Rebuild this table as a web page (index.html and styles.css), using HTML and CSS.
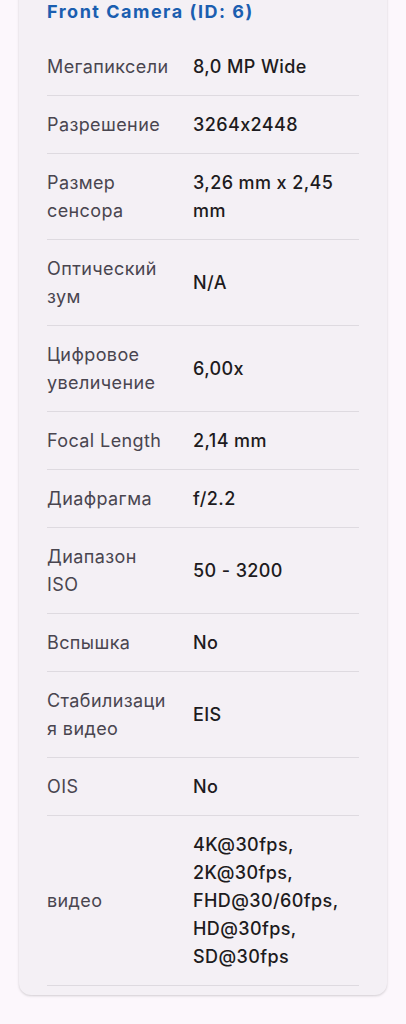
FILE: index.html
```html
<!DOCTYPE html>
<html lang="ru">
<head>
<meta charset="utf-8">
<link rel="stylesheet" href="styles.css">
</head>
<body>
<div class="card">
  <h2 class="title">Front Camera (ID: 6)</h2>
  <div class="rows">
    <div class="row"><div class="label">Мегапиксели</div><div class="value">8,0 MP Wide</div></div>
    <div class="row"><div class="label">Разрешение</div><div class="value">3264x2448</div></div>
    <div class="row"><div class="label">Размер сенсора</div><div class="value">3,26 mm x 2,45 mm</div></div>
    <div class="row"><div class="label">Оптический зум</div><div class="value">N/A</div></div>
    <div class="row"><div class="label">Цифровое увеличение</div><div class="value">6,00x</div></div>
    <div class="row"><div class="label">Focal Length</div><div class="value">2,14 mm</div></div>
    <div class="row"><div class="label">Диафрагма</div><div class="value">f/2.2</div></div>
    <div class="row"><div class="label">Диапазон ISO</div><div class="value">50 - 3200</div></div>
    <div class="row"><div class="label">Вспышка</div><div class="value">No</div></div>
    <div class="row"><div class="label">Стабилизация видео</div><div class="value">EIS</div></div>
    <div class="row"><div class="label">OIS</div><div class="value">No</div></div>
    <div class="row"><div class="label">видео</div><div class="value">4K@30fps, 2K@30fps, FHD@30/60fps, HD@30fps, SD@30fps</div></div>
  </div>
</div>
</body>
</html>
```
FILE: styles.css
```css
html, body {
  margin: 0;
  padding: 0;
  background: #fcf7fc;
}
body {
  font-family: Inter, "Noto Sans", sans-serif;
  font-feature-settings: "calt" 0;
  padding: 0 19px 28px;
}
.card {
  margin-top: -20px;
  background: #f4f0f5;
  border-radius: 12px;
  padding: 20px 28px 9px;
  box-shadow: 0 1px 3px rgba(0,0,0,0.12), 0 1px 2px rgba(0,0,0,0.06);
}
.title {
  margin: 0 0 14px;
  font-size: 18px;
  line-height: 24px;
  font-weight: 700;
  color: #1b5eb0;
  letter-spacing: 1.5px;
}
.row {
  display: grid;
  grid-template-columns: 124px 1fr;
  column-gap: 22px;
  align-items: center;
  padding: 15px 0 14px;
  border-bottom: 1px solid #dedae0;
  font-size: 18px;
  line-height: 28px;
  letter-spacing: 0.4px;
}
.label {
  color: #49454f;
  overflow-wrap: anywhere;
}
.value {
  color: #1d1b20;
  font-weight: 500;
}
```
